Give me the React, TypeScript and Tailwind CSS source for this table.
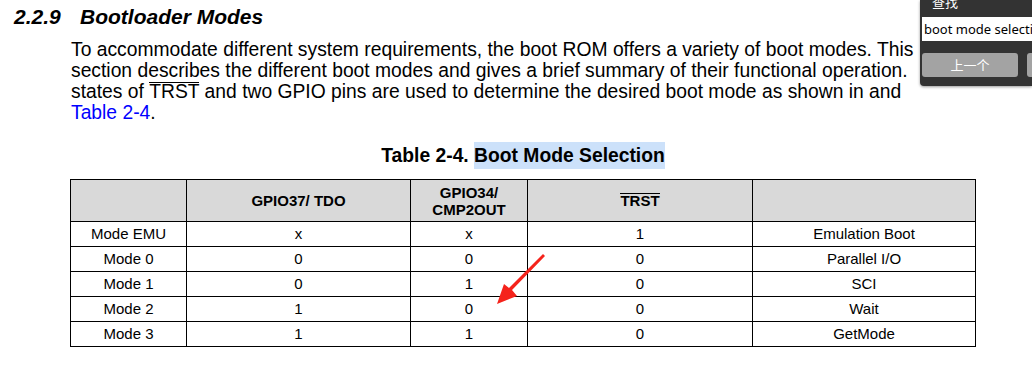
import React from "react";

const rows = [
  ["Mode EMU", "x", "x", "1", "Emulation Boot"],
  ["Mode 0", "0", "0", "0", "Parallel I/O"],
  ["Mode 1", "0", "1", "0", "SCI"],
  ["Mode 2", "1", "0", "0", "Wait"],
  ["Mode 3", "1", "1", "0", "GetMode"],
];

const cols = ["w-[116px]", "w-[224px]", "w-[117px]", "w-[225px]", "w-[223px]"];

function Bar({ children }: { children: React.ReactNode }) {
  return (
    <span className="relative before:absolute before:left-0 before:right-0 before:top-[1px] before:h-px before:bg-black before:content-['']">
      {children}
    </span>
  );
}

function FindPanel() {
  return (
    <div className="absolute right-0 top-0 w-[112px] h-[86px] bg-[#333333] rounded-bl-[4px] shadow-[0_1px_3px_rgba(0,0,0,0.4)] pl-[2px] overflow-hidden">
      <div className="text-white text-[13px] leading-none -mt-[5px] pl-[10px] font-['Noto_Sans_CJK_SC',sans-serif]">查找</div>
      <div className="mt-[9px] h-[24px] bg-white pl-[2px] text-[13px] leading-[24px] text-black whitespace-nowrap overflow-hidden font-['Noto_Sans','Noto_Sans_CJK_SC',sans-serif]">
        boot mode selection
      </div>
      <div className="mt-[12px] flex gap-[9px]">
        <div className="w-[96px] h-[24px] shrink-0 rounded-[3px] bg-[#a3a3a3] text-white text-[13px] leading-[24px] text-center font-['Noto_Sans_CJK_SC',sans-serif]">
          上一个
        </div>
        <div className="w-[40px] h-[24px] shrink-0 rounded-[3px] bg-[#a3a3a3]" />
      </div>
    </div>
  );
}

export default function App() {
  return (
    <div className="relative w-[1032px] h-[367px] overflow-hidden bg-white text-black font-['Liberation_Sans',Arial,sans-serif]">
      <h2 className="pt-[5px] pl-[14px] text-[21px] leading-[24px] font-bold italic whitespace-nowrap">
        <span className="inline-block w-[66px]">2.2.9</span>Bootloader Modes
      </h2>
      <div className="mt-[10px] pl-[71px] text-[19.3px] leading-[21px] whitespace-nowrap">
        <div>To accommodate different system requirements, the boot ROM offers a variety of boot modes. This</div>
        <div>section describes the different boot modes and gives a brief summary of their functional operation.</div>
        <div>
          states of <Bar>TRST</Bar> and two GPIO pins are used to determine the desired boot mode as shown in and
        </div>
        <div>
          <span className="text-[#0000ff]">Table 2-4</span>.
        </div>
      </div>
      <div className="mt-[19px] ml-[70px] w-[906px] flex justify-center text-[19.3px] leading-[27px] font-bold whitespace-nowrap">
        <span>Table 2-4.&nbsp;</span>
        <span className="bg-[#cce1fa]">Boot Mode Selection</span>
      </div>
      <div className="mt-[10px] ml-[70px] w-[906px] border-t border-l border-black text-[15px]">
        <div className="flex h-[42px] bg-[#d9d9d9] font-bold leading-[17px]">
          {["", "GPIO37/ TDO", "GPIO34/\nCMP2OUT", "TRST", ""].map((h, i) => (
            <div
              key={i}
              className={`${cols[i]} shrink-0 border-r border-b border-black flex items-center justify-center text-center whitespace-pre-line`}
            >
              {h === "TRST" ? <Bar>TRST</Bar> : h}
            </div>
          ))}
        </div>
        {rows.map((r) => (
          <div key={r[0]} className="flex h-[25px] leading-[24px]">
            {r.map((c, i) => (
              <div key={i} className={`${cols[i]} shrink-0 border-r border-b border-black text-center`}>
                {c}
              </div>
            ))}
          </div>
        ))}
      </div>
      <svg className="absolute left-[494px] top-[250px]" width="54" height="58" viewBox="0 0 54 58">
        <polygon points="49,4 51,6 18,40 23,46 3,54 10,34 15,38" fill="#f5231b" />
      </svg>
      <FindPanel />
    </div>
  );
}
